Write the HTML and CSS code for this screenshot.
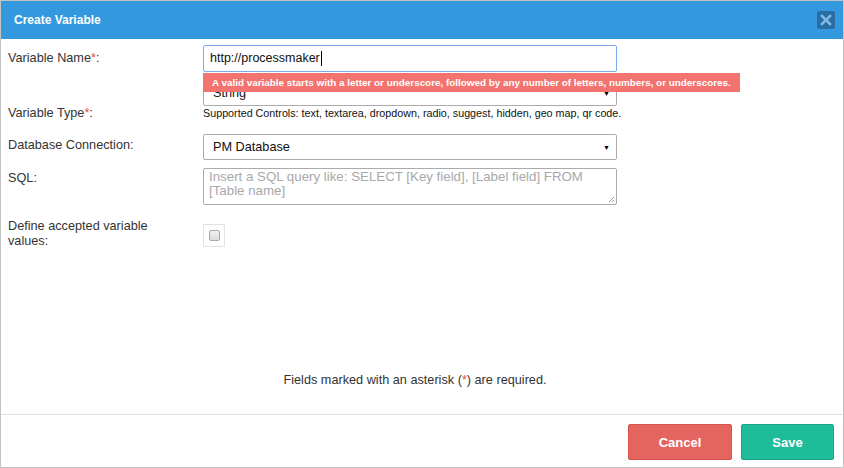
FILE: index.html
```html
<!DOCTYPE html>
<html>
<head>
<meta charset="utf-8">
<link rel="stylesheet" href="styles.css">
</head>
<body>
<div class="dialog">
  <div class="header">
    <span class="title">Create Variable</span>
    <span class="close"><svg width="12" height="12" viewBox="0 0 12 12"><path d="M2 2 L10 10 M10 2 L2 10" stroke="#7fb9ea" stroke-width="2.6" stroke-linecap="square"/></svg></span>
  </div>
  <div class="body">
    <div class="form">
      <div class="row row-name">
        <div class="label">Variable Name<span class="req">*</span>:</div>
        <div class="ctrl">
          <div class="input focus">http://processmaker<span class="caret"></span></div>
          <div class="tip">A valid variable starts with a letter or underscore, followed by any number of letters, numbers, or underscores.</div>
        </div>
      </div>
      <div class="row row-type">
        <div class="label">Variable Type<span class="req">*</span>:</div>
        <div class="ctrl">
          <div class="select">String<span class="arrow">▼</span></div>
          <div class="help">Supported Controls: text, textarea, dropdown, radio, suggest, hidden, geo map, qr code.</div>
        </div>
      </div>
      <div class="row row-db">
        <div class="label">Database Connection:</div>
        <div class="ctrl">
          <div class="select">PM Database<span class="arrow">▼</span></div>
        </div>
      </div>
      <div class="row row-sql">
        <div class="label">SQL:</div>
        <div class="ctrl">
          <div class="textarea">Insert a SQL query like: SELECT [Key field], [Label field] FROM [Table name]<svg class="grip" width="7" height="7" viewBox="0 0 7 7"><path d="M6 1 L1 6 M6 4 L4 6" stroke="#999" stroke-width="1"/></svg></div>
        </div>
      </div>
      <div class="row row-def">
        <div class="label">Define accepted variable values:</div>
        <div class="ctrl">
          <div class="checkwrap"><span class="check"></span></div>
        </div>
      </div>
    </div>
    <div class="note">Fields marked with an asterisk (<span class="req">*</span>) are required.</div>
  </div>
  <div class="footer">
    <button class="btn cancel">Cancel</button>
    <button class="btn save">Save</button>
  </div>
</div>
</body>
</html>
```
FILE: styles.css
```css
* { box-sizing: border-box; }
html, body { margin: 0; padding: 0; background: #fff; }
body {
  font-family: "Liberation Sans", Arial, sans-serif;
  font-size: 12.7px;
  color: #333;
}
.dialog {
  width: 844px;
  height: 468px;
  border: 1px solid #c4c4c4;
  display: flex;
  flex-direction: column;
}
.header {
  height: 38px;
  background: #3498de;
  display: flex;
  align-items: center;
  justify-content: space-between;
  padding: 0 8px 0 13px;
}
.title {
  color: #fff;
  font-size: 12px;
  font-weight: bold;
}
.close {
  width: 18px;
  height: 18px;
  background: #2a6da3;
  border-radius: 2px;
  display: flex;
  align-items: center;
  justify-content: center;
}
.body {
  flex: 1;
  display: flex;
  flex-direction: column;
  justify-content: space-between;
  padding: 6px 0 26px 7px;
}
.form {
  display: flex;
  flex-direction: column;
}
.row {
  display: flex;
}
.label {
  width: 195px;
  flex: none;
  line-height: 15px;
  padding-right: 40px;
}
.ctrl {
  width: 414px;
  position: relative;
}
.req { color: #e74c3c; }
.row-name .label { padding-top: 6px; }
.row-type { margin-top: 8px; }
.row-type .label { padding-top: 26px; }
.row-db { margin-top: 13px; }
.row-db .label { padding-top: 4px; }
.row-sql { margin-top: 8px; }
.row-sql .label { padding-top: 3px; }
.row-def { margin-top: 13px; }
.row-def .label { padding-top: 1px; }
.row-def .checkwrap { margin-top: 6px; }

.input, .select, .textarea {
  border: 1px solid #ababab;
  border-radius: 2px;
  background: #fff;
  color: #111;
  font-size: 12.7px;
}
.input {
  height: 27px;
  padding: 0 6px;
  line-height: 25px;
  display: flex;
  align-items: center;
  font-size: 12.5px;
}
.input.focus { border-color: #7aaaf0; }
.caret {
  display: inline-block;
  width: 1px;
  height: 15px;
  background: #000;
  margin-left: 1px;
}
.tip {
  position: absolute;
  left: 0;
  top: 28px;
  height: 19px;
  line-height: 19px;
  padding: 0 9px;
  background: #f3736e;
  color: #fff;
  font-size: 9.9px;
  font-weight: bold;
  white-space: nowrap;
  z-index: 2;
}
.select {
  height: 26px;
  padding: 0 6px 0 9px;
  display: flex;
  align-items: center;
  justify-content: space-between;
}
.arrow {
  font-size: 7px;
  color: #000;
}
.help {
  font-size: 10.75px;
  line-height: 14px;
  color: #111;
  white-space: nowrap;
}
.textarea {
  position: relative;
  height: 37px;
  padding: 1px 5px;
  font-size: 13.3px;
  line-height: 14px;
  color: #a9a9a9;
}
.grip {
  position: absolute;
  right: 1px;
  bottom: 1px;
}
.checkwrap {
  width: 22px;
  height: 23px;
  border: 1px solid #e3e3e3;
  display: flex;
  align-items: center;
  justify-content: center;
}
.check {
  width: 11px;
  height: 11px;
  border: 1px solid #a8a8a8;
  border-radius: 2px;
  background: linear-gradient(#f0f0f0, #dcdcdc);
}
.note {
  text-align: center;
  line-height: 16px;
  padding-right: 21px;
}
.footer {
  height: 53px;
  border-top: 1px solid #e0e0e0;
  display: flex;
  justify-content: flex-end;
  align-items: flex-start;
  gap: 9px;
  padding: 9px 9px 0 0;
}
.btn {
  height: 36px;
  border-radius: 2px;
  font-family: "Liberation Sans", Arial, sans-serif;
  font-size: 13px;
  font-weight: bold;
  color: #fff;
  padding: 0;
}
.cancel {
  width: 104px;
  background: #e4655f;
  border: 1px solid #d9534f;
}
.save {
  width: 93px;
  background: #1fbc9c;
  border: 1px solid #1aa587;
}
```
